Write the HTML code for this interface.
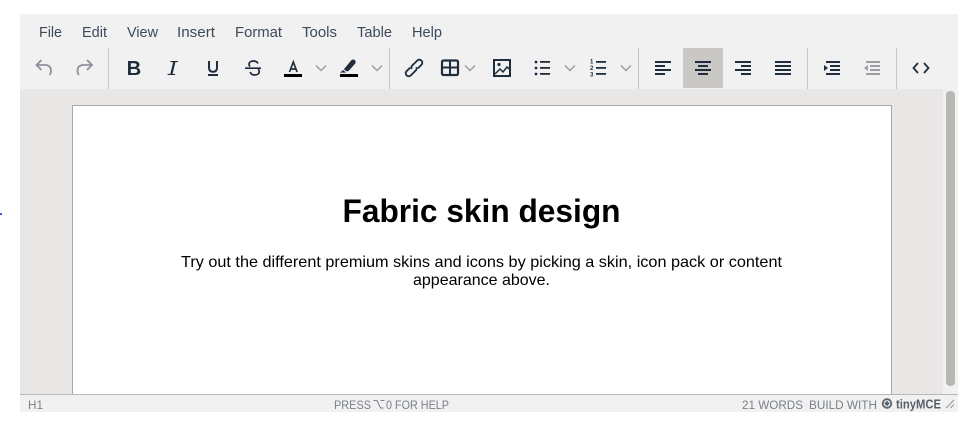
<!DOCTYPE html>
<html><head><meta charset="utf-8"><style>
html,body{margin:0;padding:0;background:#fff;width:975px;height:427px;overflow:hidden}
svg{display:block}
.m{font:14.5px "Liberation Sans",sans-serif;fill:#3d4a5a}
.s{font:12px "Liberation Sans",sans-serif;fill:#7a8088}
.i{fill:none;stroke:#1f2d3d}
.d{fill:none;stroke:#8d939b;stroke-width:1.8}
.c{fill:none;stroke:#9aa0a8;stroke-width:1.5}
.f{fill:#1f2d3d}
</style></head><body>
<svg width="975" height="427" viewBox="0 0 975 427" xmlns="http://www.w3.org/2000/svg">
<rect width="975" height="427" fill="#fff"/>
<rect x="0" y="213" width="2" height="2" fill="#3b5bff"/>
<rect x="20" y="14" width="938" height="75" fill="#f1f1f1"/>
<rect x="20" y="89" width="938" height="305" fill="#e8e7e5"/>
<rect x="943" y="89" width="15" height="305" fill="#f1f1f1"/>
<rect x="946" y="91" width="9" height="295" rx="4" fill="#b9b7b4"/>
<rect x="72.500" y="105.500" width="819" height="295" fill="#fff" stroke="#a8a8a8"/>
<rect x="20" y="394" width="938" height="18" fill="#f1f1f1"/>
<rect x="20" y="394" width="938" height="1" fill="#b8b8b8"/>

<g class="m">
<text x="39" y="37" textLength="23" lengthAdjust="spacingAndGlyphs">File</text>
<text x="82" y="37" textLength="25" lengthAdjust="spacingAndGlyphs">Edit</text>
<text x="127" y="37" textLength="31" lengthAdjust="spacingAndGlyphs">View</text>
<text x="177" y="37" textLength="38" lengthAdjust="spacingAndGlyphs">Insert</text>
<text x="235" y="37" textLength="47" lengthAdjust="spacingAndGlyphs">Format</text>
<text x="302" y="37" textLength="35" lengthAdjust="spacingAndGlyphs">Tools</text>
<text x="357" y="37" textLength="35" lengthAdjust="spacingAndGlyphs">Table</text>
<text x="412" y="37" textLength="30" lengthAdjust="spacingAndGlyphs">Help</text>
</g>

<g fill="#c6c6c6">
<rect x="108" y="48" width="1" height="41"/><rect x="389" y="48" width="1" height="41"/>
<rect x="638" y="48" width="1" height="41"/><rect x="807" y="48" width="1" height="41"/>
<rect x="896" y="48" width="1" height="41"/>
</g>
<rect x="683" y="48" width="40" height="40" fill="#cac8c4"/>

<!-- undo / redo -->
<path class="d" d="M41.500 60l-5 5 5 5M36.500 65h9c3.500 0 5.500 2.500 5.500 5.500 0 2-.5 3.500-1.500 4.500"/>
<path class="d" d="M87 60l5 5-5 5M92 65h-9c-3.500 0-5.500 2.500-5.500 5.500 0 2 .5 3.500 1.500 4.500"/>

<!-- B I U S -->
<path class="f" fill-rule="evenodd" d="M128 61h6.500c3 0 5 1.400 5 3.800 0 1.500-.9 2.600-2.300 3.100 1.900.5 3.100 1.800 3.100 3.600 0 2.500-2.200 3.500-5.300 3.500H128zM130.800 63.200v3.700h3.300c1.600 0 2.500-.7 2.500-1.900 0-1.200-.9-1.800-2.500-1.800zM130.800 69v4h4c1.700 0 2.600-.7 2.600-2 0-1.300-.9-2-2.600-2z"/>
<path class="f" d="M170.500 61h7.500v1.100h-2.600L172.600 73.900h2.500V75h-7.500v-1.100h2.700L173.100 62.100h-2.600z"/>
<path class="i" style="stroke-width:2" d="M209 61v6.500c0 3 1.500 4.300 4 4.300s4-1.300 4-4.300V61"/>
<rect x="208" y="74" width="10" height="2" class="f"/>
<path class="i" style="stroke-width:1.700" d="M258 63.500c-.7-1.500-2.300-2.500-4.500-2.500-2.700 0-4.500 1.300-4.500 3.300 0 1 .4 1.700 1.100 2.300M250.200 72c.6 1.900 2.400 3 4.500 3 2.700 0 4.500-1.300 4.500-3.400 0-1.100-.4-1.900-1.100-2.500M245 68.200h16"/>

<!-- font color -->
<path class="i" style="stroke-width:1.700" d="M289.500 72l3.800-10 3.800 10M291 69h4.800"/>
<rect x="284" y="74" width="18" height="3" fill="#000"/>
<path class="c" d="M316 65.500l5 5 5-5"/>
<!-- highlight -->
<path class="f" d="M351.500 60c1.100-.8 2.600-.7 3.500.3.900 1 .9 2.500 0 3.400L349 70.500c-1 1-2.600 1-3.600 0l-1.500-1.300zM343.200 70l2.900 2.600H340z"/>
<rect x="340" y="74" width="18" height="3" fill="#000"/>
<path class="c" d="M372 65.500l5 5 5-5"/>

<!-- link -->
<g transform="rotate(-45 414 68)" class="i" style="stroke-width:1.800">
<path d="M411.500 65h-5a3 3 0 0 0 0 6h7a3 3 0 0 0 2.800-2"/>
<path d="M416.500 71h5a3 3 0 0 0 0-6h-7a3 3 0 0 0-2.800 2"/>
</g>

<!-- table -->
<rect x="442" y="60.500" width="16" height="14.500" rx="1.500" class="i" style="stroke-width:2.200"/>
<path class="i" style="stroke-width:2" d="M442 67.500h16M450 60.500v14.500"/>
<path class="c" d="M465 65.500l5 5 5-5"/>

<!-- image -->
<rect x="494" y="60" width="16" height="16" class="i" style="stroke-width:2"/>
<circle cx="499" cy="64.500" r="1.600" class="f"/>
<path class="i" style="stroke-width:1.500" d="M495 74l5-5 3 3 4-5 3.500 3"/>

<!-- bullist -->
<g class="f"><circle cx="536" cy="62" r="1.400"/><circle cx="536" cy="68" r="1.400"/><circle cx="536" cy="74" r="1.400"/>
<rect x="540" y="61" width="10" height="1.800"/><rect x="540" y="67" width="10" height="1.800"/><rect x="540" y="73" width="10" height="1.800"/></g>
<path class="c" d="M565 65.500l5 5 5-5"/>

<!-- numlist -->
<g class="f" font-family="'Liberation Sans',sans-serif" font-size="6" font-weight="700">
<text x="590" y="63.500">1</text><text x="590" y="70">2</text><text x="590" y="76.500">3</text>
<rect x="596" y="61" width="10" height="1.800"/><rect x="596" y="67" width="10" height="1.800"/><rect x="596" y="73" width="10" height="1.800"/></g>
<path class="c" d="M621 65.500l5 5 5-5"/>

<!-- align -->
<g class="f">
<rect x="655" y="61" width="16" height="2"/><rect x="655" y="65" width="10" height="2"/><rect x="655" y="69" width="16" height="2"/><rect x="655" y="73" width="10" height="2"/>
<rect x="695" y="61" width="16" height="2"/><rect x="698" y="65" width="10" height="2"/><rect x="695" y="69" width="16" height="2"/><rect x="698" y="73" width="10" height="2"/>
<rect x="735" y="61" width="16" height="2"/><rect x="741" y="65" width="10" height="2"/><rect x="735" y="69" width="16" height="2"/><rect x="741" y="73" width="10" height="2"/>
<rect x="775" y="61" width="16" height="2"/><rect x="775" y="65" width="16" height="2"/><rect x="775" y="69" width="16" height="2"/><rect x="775" y="73" width="16" height="2"/>
<!-- indent -->
<rect x="826" y="61" width="14" height="2"/><rect x="830" y="65" width="10" height="2"/><rect x="830" y="69" width="10" height="2"/><rect x="826" y="73" width="14" height="2"/>
<path d="M824 65l4 3-4 3z"/>
</g>
<g fill="#9b9ea3">
<rect x="866" y="61" width="14" height="2"/><rect x="870" y="65" width="10" height="2"/><rect x="870" y="69" width="10" height="2"/><rect x="866" y="73" width="14" height="2"/>
<path d="M868 65l-4 3 4 3z"/>
</g>
<!-- code -->
<path class="i" style="stroke-width:1.800" d="M918 63l-4.500 5 4.500 5M924 63l4.500 5-4.500 5"/>

<!-- content -->
<text x="342.500" y="222" font-family="'Liberation Sans',sans-serif" font-size="32" font-weight="700" fill="#000" textLength="278" lengthAdjust="spacingAndGlyphs">Fabric skin design</text>
<g font-family="'Liberation Sans',sans-serif" font-size="16" fill="#000">
<text x="181" y="267" textLength="601" lengthAdjust="spacingAndGlyphs">Try out the different premium skins and icons by picking a skin, icon pack or content</text>
<text x="481.500" y="285" text-anchor="middle">appearance above.</text>
</g>

<!-- status -->
<g class="s">
<text x="28" y="409" textLength="15" lengthAdjust="spacingAndGlyphs">H1</text>
<text x="334" y="409" textLength="37" lengthAdjust="spacingAndGlyphs">PRESS</text>
<text x="386" y="409" textLength="63" lengthAdjust="spacingAndGlyphs">0 FOR HELP</text>
<text x="742" y="409" textLength="61" lengthAdjust="spacingAndGlyphs">21 WORDS</text>
<text x="809" y="409" textLength="68" lengthAdjust="spacingAndGlyphs">BUILD WITH</text>
</g>
<path d="M373.500 400.500h3.500l3.500 7.500h3M380.500 400.500h4" fill="none" stroke="#7a8088" stroke-width="1"/>
<circle cx="887" cy="403.500" r="4.300" fill="none" stroke="#5a646f" stroke-width="1.800"/>
<path d="M887 400.800l2.700 2.700-2.700 2.700-2.700-2.700z" fill="#5a646f"/>
<text x="896" y="408.500" font-family="'Liberation Sans',sans-serif" font-size="13" font-weight="700" fill="#566069" textLength="45" lengthAdjust="spacingAndGlyphs">tinyMCE</text>
<path d="M946 408l8-8M950.500 408l3.500-3.500" stroke="#8d939b" stroke-width="1" fill="none"/>
</svg>
</body></html>
